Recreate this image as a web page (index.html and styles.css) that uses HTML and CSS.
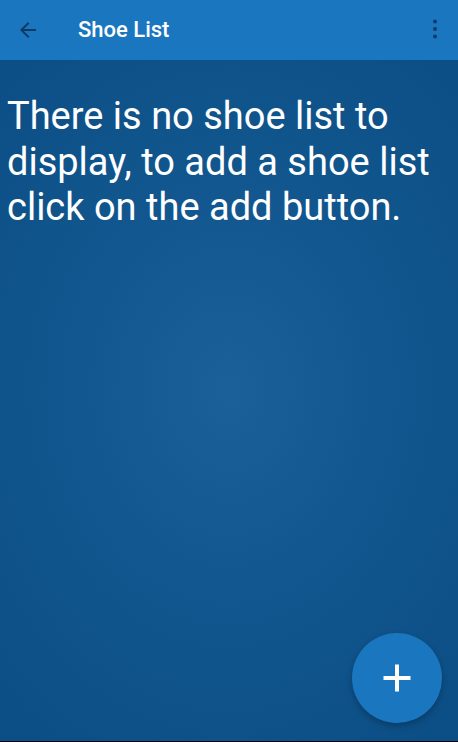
FILE: index.html
```html
<!DOCTYPE html>
<html>
<head>
<meta charset="utf-8">
<link rel="stylesheet" href="styles.css">
</head>
<body>
<div class="screen">
  <header class="appbar">
    <button class="icon-btn back" aria-label="Back">
      <svg width="24" height="24" viewBox="0 0 24 24"><path d="M20 11H7.83l5.59-5.59L12 4l-8 8 8 8 1.41-1.41L7.83 13H20v-2z" fill="#0d3a66"/></svg>
    </button>
    <h1 class="title">Shoe List</h1>
    <button class="icon-btn more" aria-label="More options">
      <svg width="24" height="24" viewBox="0 0 24 24"><circle cx="12" cy="4.6" r="2" fill="#0d3a66"/><circle cx="12" cy="12" r="2" fill="#0d3a66"/><circle cx="12" cy="19.4" r="2" fill="#0d3a66"/></svg>
    </button>
  </header>
  <main class="content">
    <p class="empty">There is no shoe list to display, to add a shoe list click on the add button.</p>
    <button class="fab" aria-label="Add">
      <svg width="28" height="28" viewBox="0 0 28 28"><rect x="0.5" y="12" width="27" height="4" fill="#fff"/><rect x="12" y="0.5" width="4" height="27" fill="#fff"/></svg>
    </button>
  </main>
</div>
</body>
</html>
```

FILE: styles.css
```css
html, body {
  margin: 0;
  padding: 0;
  background: #000;
}
.screen {
  width: 458px;
  height: 741px;
  display: flex;
  flex-direction: column;
  font-family: Roboto, "Noto Sans", sans-serif;
  overflow: hidden;
}
.appbar {
  height: 60px;
  flex: 0 0 60px;
  background: #1b76c0;
  display: flex;
  align-items: center;
  padding: 0 0 0 16px;
  box-sizing: border-box;
  position: relative;
  z-index: 1;
}
.icon-btn {
  background: none;
  border: 0;
  padding: 0;
  width: 24px;
  height: 24px;
  display: flex;
  align-items: center;
  justify-content: center;
}
.back {
  margin-top: -1px;
}
.title {
  margin: 0 0 0 38px;
  font-size: 22px;
  font-weight: 500;
  color: #fff;
  flex: 1;
  line-height: 24px;
}
.more {
  margin-right: 11px;
  margin-top: -2px;
}
.content {
  flex: 1;
  position: relative;
  background: radial-gradient(ellipse 330px 420px at 229px 330px, #1b6098 0%, #12578f 45%, #0c4f86 100%);
}
.empty {
  margin: 0;
  padding: 34px 8px 0 7px;
  color: #fff;
  font-size: 38px;
  line-height: 45.5px;
  font-weight: 400;
}
.fab {
  position: absolute;
  left: 352px;
  top: 573px;
  width: 90px;
  height: 90px;
  border-radius: 50%;
  border: 0;
  background: #1b76c0;
  display: flex;
  align-items: center;
  justify-content: center;
  box-shadow: 0 3px 6px rgba(0, 0, 0, 0.25);
  padding: 0;
}
```
